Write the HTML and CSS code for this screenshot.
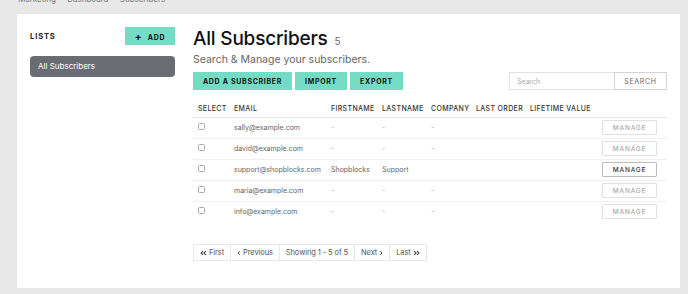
FILE: index.html
```html
<!DOCTYPE html>
<html lang="en">
<head>
    <meta charset="UTF-8">
    <meta name="viewport" content="width=device-width, initial-scale=1.0">
    <title>Subscribers</title>
    <link rel="stylesheet" href="styles.css">
</head>
<body>
    <div class="page">
        <div class="crumbs">Marketing &nbsp;·&nbsp; Dashboard &nbsp;·&nbsp; Subscribers</div>

        <div class="card">
            <aside class="lists">
                <div class="lists-head">
                    <h3>Lists</h3>
                    <button class="btn btn-teal btn-add"><span class="plus">+</span> Add</button>
                </div>
                <a class="list-item active" href="#">All Subscribers</a>
            </aside>

            <main class="main">
                <h1 class="title">All Subscribers <span class="count">5</span></h1>
                <p class="subtitle">Search &amp; Manage your subscribers.</p>

                <div class="toolbar">
                    <div class="actions">
                        <button class="btn btn-teal">Add a Subscriber</button>
                        <button class="btn btn-teal">Import</button>
                        <button class="btn btn-teal">Export</button>
                    </div>
                    <form class="search">
                        <input type="text" placeholder="Search">
                        <button type="button">Search</button>
                    </form>
                </div>

                <table class="subs">
                    <colgroup>
                        <col style="width: 36px">
                        <col style="width: 97px">
                        <col style="width: 51px">
                        <col style="width: 49px">
                        <col style="width: 45px">
                        <col style="width: 54px">
                        <col style="width: 72px">
                        <col style="width: 70px">
                    </colgroup>
                    <thead>
                        <tr>
                            <th>Select</th>
                            <th>Email</th>
                            <th>Firstname</th>
                            <th>Lastname</th>
                            <th>Company</th>
                            <th>Last Order</th>
                            <th>Lifetime Value</th>
                            <th></th>
                        </tr>
                    </thead>
                    <tbody id="rows">
                        <!-- rows built in script -->
                    </tbody>
                </table>

                <nav class="pager">
                    <a href="#"><svg viewBox="0 0 8 6"><path d="M3.5 0.8 1.3 3 3.5 5.2M6.7 0.8 4.5 3 6.7 5.2"/></svg>First</a>
                    <a href="#"><svg viewBox="0 0 5 6" class="single"><path d="M3.4 0.8 1.2 3 3.4 5.2"/></svg>Previous</a>
                    <span>Showing 1 - 5 of 5</span>
                    <a href="#">Next<svg viewBox="0 0 5 6" class="single"><path d="M1.6 0.8 3.8 3 1.6 5.2"/></svg></a>
                    <a href="#">Last<svg viewBox="0 0 8 6"><path d="M1.3 0.8 3.5 3 1.3 5.2M4.5 0.8 6.7 3 4.5 5.2"/></svg></a>
                </nav>
            </main>
        </div>
    </div>

    <script>
        const subscribers = [
            { email: 'sally@example.com', first: '-', last: '-', company: '-' },
            { email: 'david@example.com', first: '-', last: '-', company: '-' },
            { email: 'support@shopblocks.com', first: 'Shopblocks', last: 'Support', company: '', highlight: true },
            { email: 'maria@example.com', first: '-', last: '-', company: '-' },
            { email: 'info@example.com', first: '-', last: '-', company: '-' }
        ];

        const tbody = document.getElementById('rows');
        subscribers.forEach((s) => {
            const tr = document.createElement('tr');
            tr.innerHTML = `
                <td><input type="checkbox" class="check"></td>
                <td>${s.email}</td>
                <td class="${s.first === '-' ? 'dash' : ''}">${s.first}</td>
                <td class="${s.last === '-' ? 'dash' : ''}">${s.last}</td>
                <td class="dash">${s.company}</td>
                <td></td>
                <td></td>
                <td><button class="manage${s.highlight ? ' hover' : ''}">Manage</button></td>`;
            tbody.appendChild(tr);
        });
    </script>
</body>
</html>
```

FILE: styles.css
```css
* {
    box-sizing: border-box;
}

body {
    margin: 0;
    background: #e8e8e8;
    font-family: Inter, "Noto Sans", sans-serif;
    color: #222;
}

.page {
    padding: 0 8px 5px 17px;
}

.crumbs {
    height: 20px;
    margin-top: -6px;
    padding-left: 1px;
    font-size: 8px;
    line-height: 10px;
    color: #777;
}

.card {
    display: flex;
    gap: 18px;
    background: #fff;
    padding: 13px 13px 27px 13px;
}

/* sidebar */
.lists {
    width: 145px;
    flex-shrink: 0;
}

.lists-head {
    display: flex;
    justify-content: space-between;
    align-items: center;
    margin-bottom: 11px;
}

.lists-head h3 {
    margin: 0;
    font-size: 7.5px;
    font-weight: 700;
    text-transform: uppercase;
    letter-spacing: 0.12em;
}

.btn {
    border: 0;
    font-family: inherit;
    font-weight: 700;
    text-transform: uppercase;
    letter-spacing: 0.1em;
    color: #111;
    cursor: pointer;
}

.btn-teal {
    background: #74dcc4;
    height: 18px;
    padding: 0 10px;
    font-size: 7px;
}

.btn-add {
    width: 50px;
    font-size: 7px;
    padding: 0;
}

.btn-add .plus {
    font-size: 10px;
    font-weight: 700;
    margin-right: 3px;
}

.list-item {
    display: block;
    height: 21px;
    line-height: 21px;
    padding-left: 8px;
    border-radius: 4px;
    background: #6b6b73;
    color: #fff;
    font-size: 8px;
    text-decoration: none;
}

/* main */
.main {
    flex: 1;
}

.title {
    margin: -1px 0 0;
    font-size: 19px;
    font-weight: 500;
    line-height: 26px;
    letter-spacing: -0.2px;
    color: #111;
}

.title .count {
    font-size: 10px;
    font-weight: 400;
    color: #666;
    letter-spacing: 0;
    margin-left: 2px;
}

.subtitle {
    margin: -1px 0 0;
    font-size: 10.5px;
    line-height: 14px;
    color: #666;
}

.toolbar {
    display: flex;
    justify-content: space-between;
    margin-top: 5px;
}

.actions {
    display: flex;
    gap: 3px;
}

.actions .btn:first-child { width: 99px; }
.actions .btn:nth-child(2) { width: 52px; }
.actions .btn:nth-child(3) { width: 53px; }
.actions .btn { padding: 0; }

.search {
    display: flex;
    margin: 0;
}

.search input {
    width: 105px;
    height: 18px;
    border: 1px solid #e2e2e2;
    border-right: 0;
    padding: 0 7px;
    font-family: inherit;
    font-size: 7px;
    outline: none;
}

.search input::placeholder {
    color: #aaa;
}

.search button {
    width: 53px;
    height: 18px;
    border: 1px solid #d4d4d4;
    background: #fff;
    font-family: inherit;
    font-size: 7px;
    letter-spacing: 0.1em;
    text-transform: uppercase;
    color: #666;
}

/* table */
.subs {
    width: 474px;
    margin-top: 12px;
    border-collapse: collapse;
    table-layout: fixed;
    font-size: 7px;
}

.subs th {
    height: 15px;
    padding: 0 0 2px 5px;
    text-align: left;
    font-weight: 500;
    text-transform: uppercase;
    letter-spacing: 0.05em;
    color: #333;
    border-bottom: 1px solid #e8e8e8;
    white-space: nowrap;
}

.subs td {
    height: 21px;
    padding: 0 0 0 5px;
    color: #666;
    white-space: nowrap;
    border-bottom: 1px solid #f0f0f0;
}

.subs tbody tr:last-child td {
    border-bottom: 0;
}

.subs td.dash {
    color: #aaa;
}

.check {
    appearance: none;
    display: block;
    width: 7px;
    height: 7px;
    margin: 0 0 2px 0;
    border: 1px solid #aaa;
    border-radius: 1.5px;
}

.manage {
    display: block;
    width: 55px;
    height: 15px;
    border: 1px solid #e0e0e0;
    border-radius: 1px;
    background: #fff;
    font-family: inherit;
    font-size: 6.5px;
    font-weight: 500;
    letter-spacing: 0.12em;
    text-transform: uppercase;
    color: #aaa;
}

.manage.hover {
    border-color: #bbb;
    color: #333;
}

/* pager */
.pager {
    display: inline-flex;
    margin-top: 22px;
    border: 1px solid #e8e8e8;
    height: 17px;
}

.pager a,
.pager span {
    display: flex;
    align-items: center;
    gap: 2px;
    padding: 0 6px;
    font-size: 7.5px;
    letter-spacing: -0.1px;
    color: #555;
    text-decoration: none;
    border-left: 1px solid #e8e8e8;
}

.pager a:first-child {
    border-left: 0;
}

.pager svg {
    width: 7px;
    height: 6px;
    fill: none;
    stroke: #333;
    stroke-width: 1.2;
}

.pager svg.single {
    width: 4px;
}
```
